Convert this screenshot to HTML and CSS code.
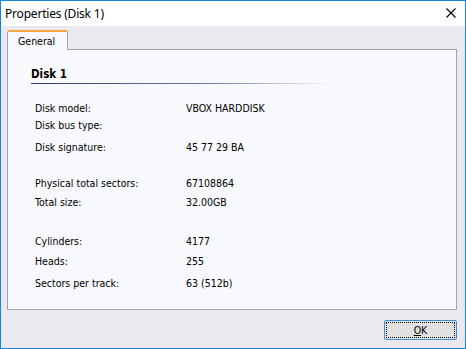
FILE: index.html
```html
<!DOCTYPE html>
<html lang="en">
<head>
    <meta charset="UTF-8">
    <meta name="viewport" content="width=device-width, initial-scale=1.0">
    <title>Properties (Disk 1)</title>
    <link rel="stylesheet" href="styles.css">
</head>
<body>
    <div class="window">
        <div class="titlebar">
            <span class="title">Properties (Disk 1)</span>
            <span class="close">
                <svg width="10" height="10" viewBox="0 0 10 10">
                    <path d="M0.5 0.5 L9.5 9.5 M9.5 0.5 L0.5 9.5" stroke="#000" stroke-width="1.1" fill="none"/>
                </svg>
            </span>
        </div>

        <div class="content">
            <div class="tabs">
                <div class="tab active">General</div>
            </div>

            <div class="panel">
                <div class="section">Disk 1</div>

                <div class="props">
                    <div class="row"><span class="label">Disk model:</span><span class="value">VBOX HARDDISK</span></div>
                    <div class="row"><span class="label">Disk bus type:</span><span class="value"></span></div>
                    <div class="row gap-s"><span class="label">Disk signature:</span><span class="value">45 77 29 BA</span></div>

                    <div class="row gap-l"><span class="label">Physical total sectors:</span><span class="value">67108864</span></div>
                    <div class="row gap-xs"><span class="label">Total size:</span><span class="value">32.00GB</span></div>

                    <div class="row gap-xl"><span class="label">Cylinders:</span><span class="value">4177</span></div>
                    <div class="row gap-m"><span class="label">Heads:</span><span class="value">255</span></div>
                    <div class="row gap-s"><span class="label">Sectors per track:</span><span class="value">63 (512b)</span></div>
                </div>
            </div>

            <div class="actions">
                <button class="btn"><span class="focus"><u>O</u>K</span></button>
            </div>
        </div>
    </div>
</body>
</html>
```

FILE: styles.css
```css
* {
    margin: 0;
    padding: 0;
    box-sizing: border-box;
}

body {
    font-family: 'DejaVu Sans Condensed', 'DejaVu Sans', sans-serif;
    font-size: 10.5px;
    color: #000;
    background: #fff;
}

.window {
    width: 466px;
    height: 349px;
    border: 1px solid #1883d7;
    display: flex;
    flex-direction: column;
    background: #ebe9ed;
}

.titlebar {
    height: 25px;
    background: #fff;
    display: flex;
    align-items: center;
    justify-content: space-between;
    padding: 0 9px 0 4px;
}

.title {
    font-family: 'Noto Sans', sans-serif;
    font-size: 12px;
    letter-spacing: -0.2px;
}

.close {
    display: flex;
    margin-top: -2px;
}

.content {
    flex: 1;
    display: flex;
    flex-direction: column;
    padding: 4px 8px 8px 6px;
}

.tabs {
    display: flex;
    height: 19px;
}

.tab {
    position: relative;
    z-index: 1;
    width: 61px;
    height: 20px;
    padding: 3px 0 0 10px;
    background: #f8f9fd;
    border: 1px solid #a0a6b0;
    border-top: 2px solid #f2a83a;
    border-bottom: none;
    border-radius: 3px 3px 0 0;
}

.panel {
    height: 261px;
    background: #f8f9fd;
    border: 1px solid #a0a6b0;
    padding: 17px 0 0 23px;
}

.section {
    font-weight: bold;
    font-size: 11.5px;
    line-height: 14px;
}

.section::after {
    content: '';
    display: block;
    width: 300px;
    height: 1px;
    margin-top: 2px;
    background: linear-gradient(to right, #2d3886, #737ba8 60%, #f8f9fd);
}

.props {
    margin-top: 16px;
    padding-left: 4px;
}

.row {
    display: flex;
    line-height: 17px;
}

.label {
    width: 151px;
}

.gap-xs {
    margin-top: 2px;
}

.gap-m {
    margin-top: 3px;
}

.gap-s {
    margin-top: 5px;
}

.gap-l {
    margin-top: 19px;
}

.gap-xl {
    margin-top: 22px;
}

.actions {
    display: flex;
    justify-content: flex-end;
    margin-top: 10px;
}

.btn {
    width: 73px;
    height: 20px;
    padding: 1px;
    border: 1px solid #3c8ed6;
    border-radius: 2px;
    background: #e1e1e1;
    font-family: inherit;
    font-size: 10.5px;
    color: #000;
}

.btn .focus {
    display: block;
    height: 100%;
    border: 1px dotted #000;
    line-height: 14px;
}
```
